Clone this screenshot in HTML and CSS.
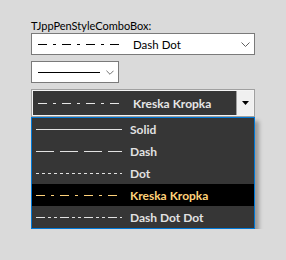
FILE: index.html
```html
<!DOCTYPE html>
<html lang="en">
<head>
    <meta charset="UTF-8">
    <meta name="viewport" content="width=device-width, initial-scale=1.0">
    <title>TJppPenStyleComboBox</title>
    <link rel="stylesheet" href="styles.css">
</head>
<body>
    <div class="panel">
        <div class="caption">TJppPenStyleComboBox:</div>

        <!-- standard combo -->
        <div class="combo combo-wide">
            <span class="pen pen-dashdot"></span>
            <span class="combo-text">Dash Dot</span>
            <svg class="chevron" width="9" height="5" viewBox="0 0 9 5">
                <polyline points="0.5,0.5 4.5,4.5 8.5,0.5" fill="none" stroke="#606060" stroke-width="1"/>
            </svg>
        </div>

        <!-- lines only -->
        <div class="combo combo-narrow">
            <span class="pen pen-solid pen-short"></span>
            <svg class="chevron" width="9" height="5" viewBox="0 0 9 5">
                <polyline points="0.5,0.5 4.5,4.5 8.5,0.5" fill="none" stroke="#606060" stroke-width="1"/>
            </svg>
        </div>

        <!-- dark combo, dropped down -->
        <div class="combo-wrap">
            <div class="dark-combo">
                <div class="dark-field">
                    <span class="pen pen-dashdot"></span>
                    <span class="combo-text">Kreska Kropka</span>
                </div>
                <div class="dark-button">
                    <svg width="7" height="4" viewBox="0 0 7 4">
                        <polygon points="0,0 7,0 3.5,4" fill="#000"/>
                    </svg>
                </div>
            </div>
            <div class="item-list">
                <div class="item"><span class="pen pen-solid"></span><span>Solid</span></div>
                <div class="item"><span class="pen pen-dash"></span><span>Dash</span></div>
                <div class="item"><span class="pen pen-dot"></span><span>Dot</span></div>
                <div class="item selected"><span class="pen pen-dashdot"></span><span>Kreska Kropka</span></div>
                <div class="item"><span class="pen pen-dashdotdot"></span><span>Dash Dot Dot</span></div>
            </div>
        </div>
    </div>
</body>
</html>
```

FILE: styles.css
```css
body {
    margin: 0;
    background-color: #dadada;
    font-family: Lato, "Liberation Sans", sans-serif;
    font-size: 11px;
    color: #000;
}

.panel {
    padding: 18px 0 0 31px;
    display: flex;
    flex-direction: column;
    align-items: flex-start;
}

.caption {
    line-height: 15px;
    height: 15px;
}

/* pen line samples */
.pen {
    display: block;
    flex: none;
    width: 82px;
    height: 1px;
}

.pen-solid {
    background: currentColor;
}

.pen-short {
    width: 62px;
}

.pen-dash {
    background: repeating-linear-gradient(90deg, currentColor 0 18px, transparent 18px 24px);
}

.pen-dot {
    background: repeating-linear-gradient(90deg, currentColor 0 3px, transparent 3px 6px);
}

.pen-dashdot {
    background: repeating-linear-gradient(90deg,
        currentColor 0 9px, transparent 9px 15px,
        currentColor 15px 18px, transparent 18px 24px);
}

.pen-dashdotdot {
    background: repeating-linear-gradient(90deg,
        currentColor 0 9px, transparent 9px 12px,
        currentColor 12px 15px, transparent 15px 18px,
        currentColor 18px 21px, transparent 21px 24px);
}

/* light combos */
.combo {
    box-sizing: border-box;
    height: 22px;
    border: 1px solid #7a7a7a;
    background-color: #fff;
    display: flex;
    align-items: center;
    padding: 0 4px 0 6px;
    font-size: 11.5px;
}

.combo-wide {
    width: 224px;
}

.combo-narrow {
    width: 88px;
    margin-top: 6px;
}

.combo-text {
    margin-left: 13px;
    white-space: nowrap;
}

.chevron {
    margin-left: auto;
    display: block;
}

.combo-narrow .chevron {
    margin-left: 6px;
}

/* dark combo */
.combo-wrap {
    margin-top: 6px;
    width: 224px;
    font-size: 12px;
}

.dark-combo {
    box-sizing: border-box;
    width: 224px;
    height: 28px;
    border: 1px solid #a0a0a0;
    padding: 1px;
    background-color: #f4f4f4;
    display: flex;
}

.dark-field {
    flex: 1;
    background-color: #363636;
    color: #e6e6e6;
    font-weight: bold;
    display: flex;
    align-items: center;
    padding-left: 5px;
}

.dark-button {
    width: 16px;
    border-left: 1px solid #a0a0a0;
    background-color: #f0f0f0;
    display: flex;
    align-items: center;
    justify-content: center;
}

.dark-button svg {
    display: block;
}

/* drop-down list */
.item-list {
    box-sizing: border-box;
    width: 224px;
    border: 1px solid #0078d7;
    background-color: #363636;
    box-shadow: 4px 4px 4px rgba(0, 0, 0, 0.3);
}

.item {
    height: 22px;
    display: flex;
    align-items: center;
    padding-left: 4px;
    color: #e2e2e2;
    font-weight: bold;
}

.item .pen {
    width: 86px;
    margin-right: 8px;
}

.item.selected {
    background-color: #000;
    color: #ffd27a;
}
```
